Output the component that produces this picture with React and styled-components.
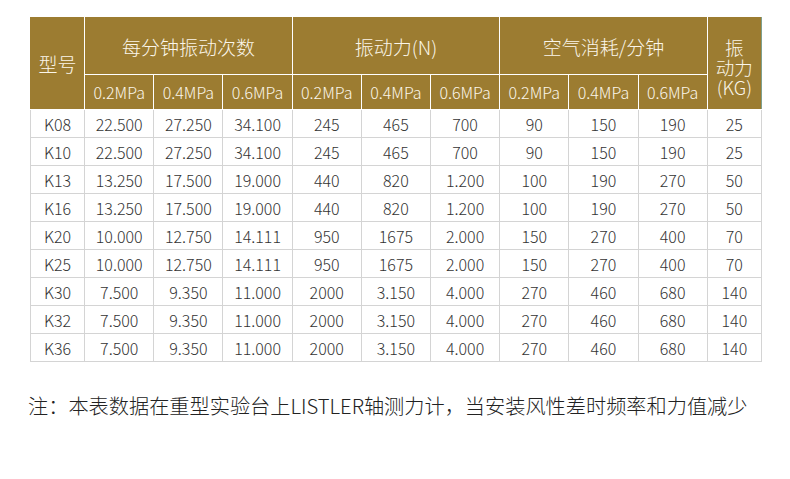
import React from 'react';
import styled, { createGlobalStyle } from 'styled-components';

const GlobalStyle = createGlobalStyle`
  html, body {
    margin: 0;
    padding: 0;
    background: #fff;
  }
  body {
    font-family: "Noto Sans CJK SC", "Noto Sans", sans-serif;
  }
`;

const Page = styled.div`
  width: 790px;
  height: 479px;
  padding: 17px 0 0 30px;
  box-sizing: border-box;
`;

const Table = styled.table`
  width: 732px;
  border-collapse: collapse;
  table-layout: fixed;
`;

const Col = styled.col`
  width: ${(p) => p.$w}px;
`;

const Head = styled.th`
  background: #9c7c31;
  color: #fbf6ea;
  font-weight: 300;
  border: 1px solid #fff;
  border-top-color: #9c7c31;
  padding: 0;
  text-align: center;
  white-space: nowrap;
  font-size: ${(p) => (p.$small ? 16 : 19)}px;
  height: ${(p) => (p.$small ? 34 : 56)}px;
  line-height: ${(p) => (p.$stack ? '20px' : 1)};
  &:first-child {
    border-left-color: #9c7c31;
  }
  &:last-child {
    border-right-color: #7ea08e;
  }
`;

const StackText = styled.span`
  display: block;
  padding-top: 6px;
  font-size: 18.5px;
`;

const Cell = styled.td`
  border: 1px solid #d4d4d4;
  height: 27px;
  padding: 0;
  text-align: center;
  font-size: 16px;
  font-weight: 300;
  line-height: 1;
  color: #333;
`;

const Note = styled.p`
  margin: 32px 0 0 -2px;
  font-size: 20.2px;
  font-weight: 300;
  line-height: 24px;
  color: #222;
  white-space: nowrap;
`;

const pressures = ['0.2MPa', '0.4MPa', '0.6MPa'];

const rows = [
  ['K08', '22.500', '27.250', '34.100', '245', '465', '700', '90', '150', '190', '25'],
  ['K10', '22.500', '27.250', '34.100', '245', '465', '700', '90', '150', '190', '25'],
  ['K13', '13.250', '17.500', '19.000', '440', '820', '1.200', '100', '190', '270', '50'],
  ['K16', '13.250', '17.500', '19.000', '440', '820', '1.200', '100', '190', '270', '50'],
  ['K20', '10.000', '12.750', '14.111', '950', '1675', '2.000', '150', '270', '400', '70'],
  ['K25', '10.000', '12.750', '14.111', '950', '1675', '2.000', '150', '270', '400', '70'],
  ['K30', '7.500', '9.350', '11.000', '2000', '3.150', '4.000', '270', '460', '680', '140'],
  ['K32', '7.500', '9.350', '11.000', '2000', '3.150', '4.000', '270', '460', '680', '140'],
  ['K36', '7.500', '9.350', '11.000', '2000', '3.150', '4.000', '270', '460', '680', '140'],
];

const widths = [54, 69, 69, 69, 69, 69, 69, 69, 69, 69, 54];

export default function App() {
  return (
    <Page>
      <GlobalStyle />
      <Table>
        <colgroup>
          {widths.map((w, i) => (
            <Col key={i} $w={w} />
          ))}
        </colgroup>
        <thead>
          <tr>
            <Head rowSpan={2}>型号</Head>
            <Head colSpan={3}>每分钟振动次数</Head>
            <Head colSpan={3}>振动力(N)</Head>
            <Head colSpan={3}>空气消耗/分钟</Head>
            <Head rowSpan={2} $stack>
              <StackText>振<br />动力<br />(KG)</StackText>
            </Head>
          </tr>
          <tr>
            {[0, 1, 2].map((g) =>
              pressures.map((p) => (
                <Head key={g + p} $small>
                  {p}
                </Head>
              ))
            )}
          </tr>
        </thead>
        <tbody>
          {rows.map((r) => (
            <tr key={r[0]}>
              {r.map((v, i) => (
                <Cell key={i}>{v}</Cell>
              ))}
            </tr>
          ))}
        </tbody>
      </Table>
      <Note>注：本表数据在重型实验台上LISTLER轴测力计，当安装风性差时频率和力值减少</Note>
    </Page>
  );
}
